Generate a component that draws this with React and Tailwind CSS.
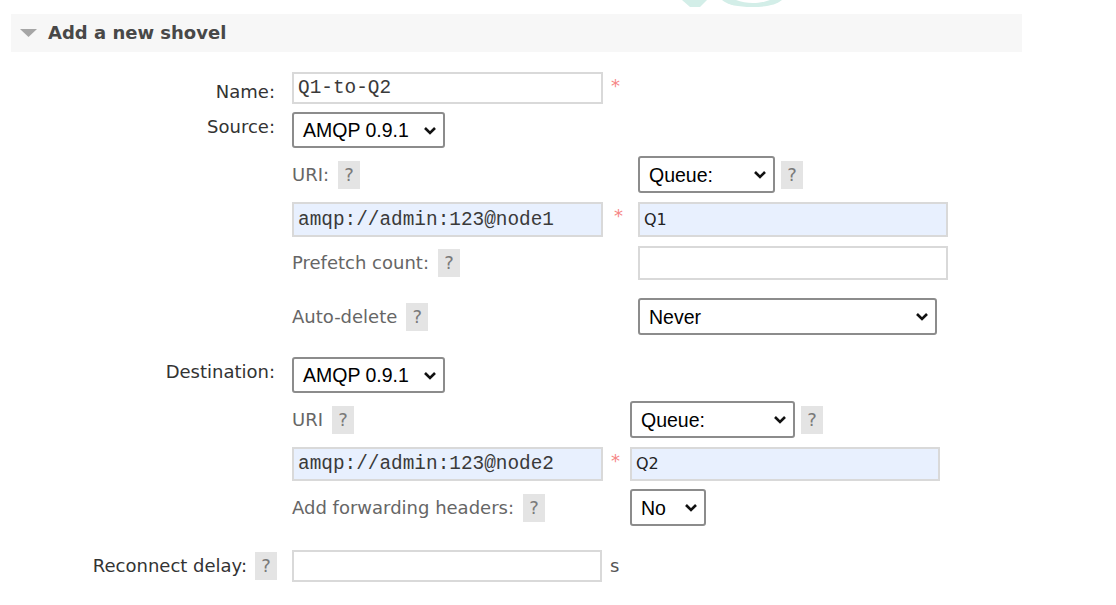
import { useState } from 'react'

const LABEL = "font-['DejaVu_Sans',sans-serif] text-[18px] leading-[20px]"

function Help() {
  return (
    <span className="inline-flex h-[28px] w-[22px] shrink-0 items-center justify-center bg-[#e4e4e4] text-[18px] leading-[20px] text-[#7a7a7a]">
      ?
    </span>
  )
}

function Star({ ml = 'ml-[9px]' }) {
  return <span className={`${ml} mt-[4px] text-[18px] leading-[20px] text-[#f68686]`}>*</span>
}

/* fake native select: border, text, chevron */
function Select({ w, h, text }) {
  return (
    <div
      style={{ width: w, height: h }}
      className="flex shrink-0 items-center justify-between rounded-[3px] border-2 border-[#8c8c8c] bg-white pl-[9px] pr-[6px] font-['Liberation_Sans',Arial,sans-serif] text-[19.5px] text-black"
    >
      <span>{text}</span>
      <svg width="14" height="9" viewBox="0 0 14 9" className="shrink-0">
        <polyline points="2,2 7,7 12,2" fill="none" stroke="#111" strokeWidth="2.6" />
      </svg>
    </div>
  )
}

function Input({ w, h, value = '', blue, mono }) {
  return (
    <div
      style={{ width: w, height: h }}
      className={`flex shrink-0 items-center border-2 border-[#d9d9d9] pl-[4px] ${blue ? 'bg-[#e8f0fe]' : 'bg-white'} ${
        mono ? "font-['Liberation_Mono',monospace] text-[19.4px] text-[#3a3a3a]" : "font-['DejaVu_Sans',sans-serif] text-[16px] text-[#222]"
      }`}
    >
      {value}
    </div>
  )
}

function SubLabel({ text }) {
  return (
    <div className="flex items-center gap-[9px] text-[#666]">
      <span>{text}</span>
      <Help />
    </div>
  )
}

export default function App() {
  const [open] = useState(true)

  return (
    <div className={`relative min-h-screen bg-white ${LABEL} text-[#333]`}>
      {/* faint watermark peeking in from the top */}
      <svg className="pointer-events-none absolute left-[678px] top-0" width="120" height="8" viewBox="0 0 120 8">
        <polygon points="4,0 29,0 22,7 12,7" fill="#d3eee8" />
        <path d="M44,0 L104,0 C98,5 88,7 74,7 C60,7 50,5 44,0 Z" fill="#d3eee8" />
        <path d="M58,0 L92,0 C86,2 80,3 75,3 C69,3 63,2 58,0 Z" fill="#ffffff" />
      </svg>

      <div className="pl-[11px] pt-[14px]">
        <div className="flex h-[38px] w-[1011px] items-center bg-[#f7f7f7]">
          <svg width="17" height="8" viewBox="0 0 17 8" className="ml-[9px]">
            <polygon points="0,0 17,0 8.5,8" fill="#a6a6a6" />
          </svg>
          <span className="ml-[11px] font-bold text-[#484848]">Add a new shovel</span>
        </div>
      </div>

      {open && (
        <div>
          {/* Name */}
          <div className="mt-[20px] flex">
            <div className="w-[275px] pt-[10px] text-right">Name:</div>
            <div className="ml-[17px] flex items-start">
              <Input w={311} h={32} mono value="Q1-to-Q2" />
              <Star ml="ml-[8px]" />
            </div>
          </div>

          {/* Source */}
          <div className="mt-[8px] flex">
            <div className="w-[275px] pt-[5px] text-right">Source:</div>
            <div className="ml-[17px]">
              <Select w={153} h={36} text="AMQP 0.9.1" />
            </div>
          </div>

          <div className="ml-[292px]">
            <div className="mt-[8px] flex h-[37px] items-center">
              <div className="w-[346px]">
                <SubLabel text="URI:" />
              </div>
              <Select w={137} h={37} text="Queue:" />
              <span className="ml-[6px]"><Help /></span>
            </div>
            <div className="mt-[9px] flex">
              <div className="flex w-[346px] items-start">
                <Input w={311} h={35} blue mono value="amqp://admin:123@node1" />
                <Star ml="ml-[11px]" />
              </div>
              <Input w={310} h={35} blue value="Q1" />
            </div>
            <div className="mt-[9px] flex h-[34px] items-center">
              <div className="w-[346px]">
                <SubLabel text="Prefetch count:" />
              </div>
              <Input w={310} h={34} />
            </div>
            <div className="mt-[18px] flex h-[37px] items-center">
              <div className="w-[346px]">
                <SubLabel text="Auto-delete" />
              </div>
              <Select w={299} h={37} text="Never" />
            </div>
          </div>

          {/* Destination */}
          <div className="mt-[22px] flex">
            <div className="w-[275px] pt-[5px] text-right">Destination:</div>
            <div className="ml-[17px]">
              <Select w={153} h={36} text="AMQP 0.9.1" />
            </div>
          </div>

          <div className="ml-[292px]">
            <div className="mt-[8px] flex h-[37px] items-center">
              <div className="w-[338px]">
                <SubLabel text="URI" />
              </div>
              <Select w={165} h={37} text="Queue:" />
              <span className="ml-[6px]"><Help /></span>
            </div>
            <div className="mt-[9px] flex">
              <div className="flex w-[338px] items-start">
                <Input w={311} h={34} blue mono value="amqp://admin:123@node2" />
                <Star ml="ml-[8px]" />
              </div>
              <Input w={310} h={34} blue value="Q2" />
            </div>
            <div className="mt-[8px] flex h-[37px] items-center">
              <div className="w-[338px]">
                <SubLabel text="Add forwarding headers:" />
              </div>
              <Select w={76} h={37} text="No" />
            </div>
          </div>

          {/* Reconnect delay */}
          <div className="mt-[24px] flex h-[32px] items-center">
            <div className="flex w-[277px] items-center justify-end gap-[8px]">
              <span>Reconnect delay:</span>
              <Help />
            </div>
            <div className="ml-[15px]">
              <Input w={310} h={32} />
            </div>
            <span className="ml-[8px] text-[#555]">s</span>
          </div>
        </div>
      )}
    </div>
  )
}
